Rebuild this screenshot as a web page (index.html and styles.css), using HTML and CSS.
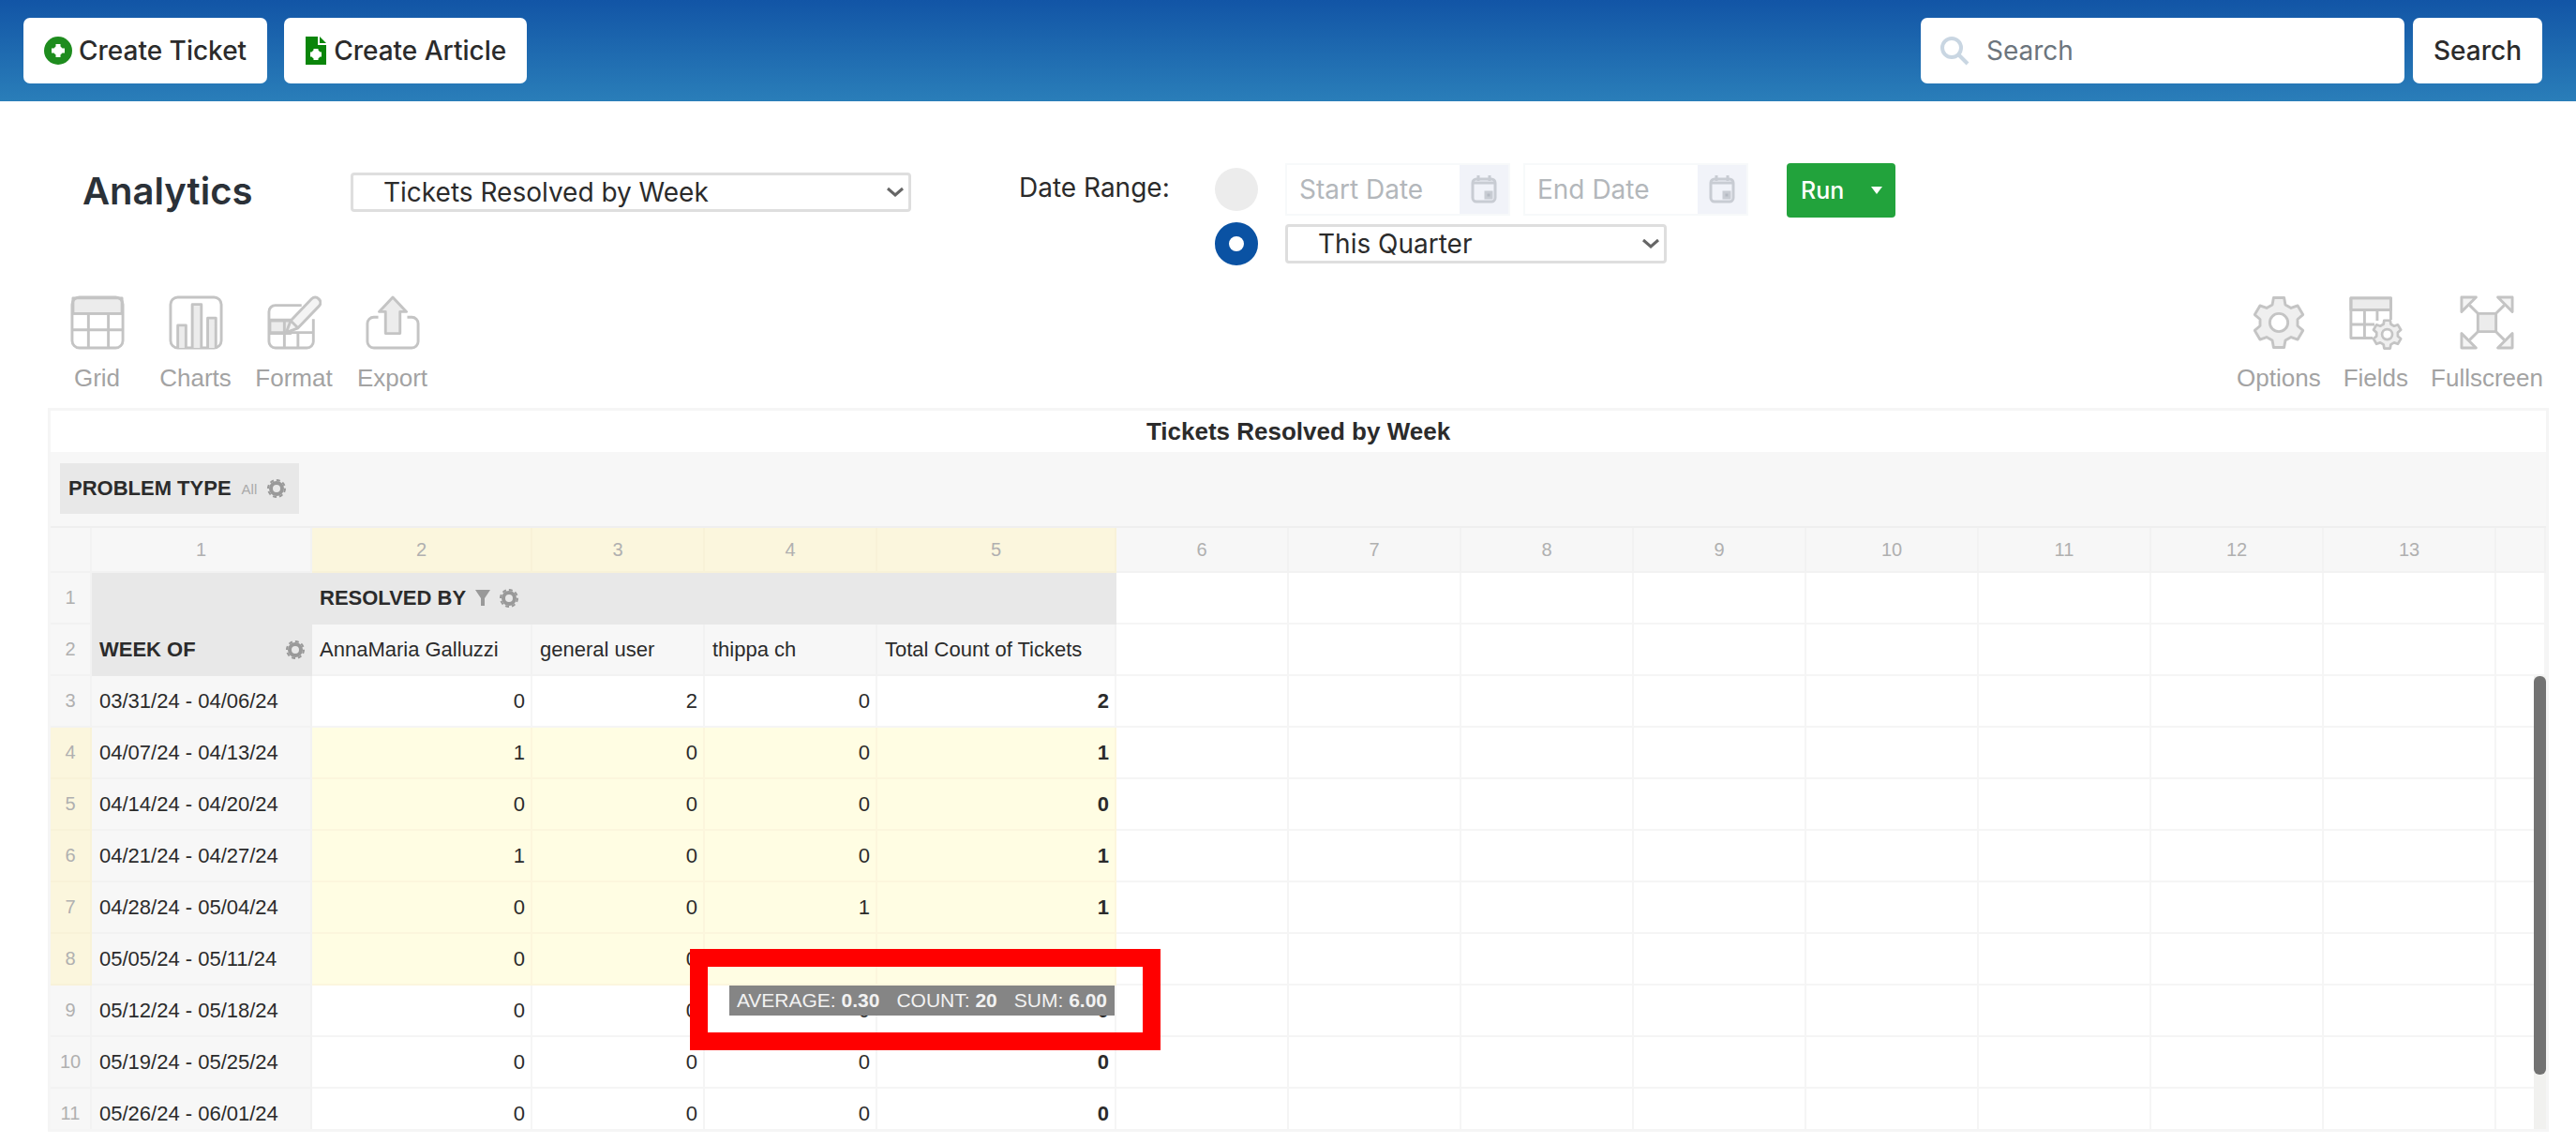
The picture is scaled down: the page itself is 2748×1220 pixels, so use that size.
FILE: index.html
```html
<!DOCTYPE html>
<html lang="en">
<head>
    <meta charset="UTF-8">
    <meta name="viewport" content="width=device-width, initial-scale=1.0">
    <title>Analytics</title>
    <link rel="stylesheet" href="styles.css">
</head>
<body>
    <svg class="sprite" aria-hidden="true">
        <symbol id="gear" viewBox="0 0 60 60">
            <path d="M22.8 10.3 24.2 2.6H35.8L37.2 10.3 43.5 13.9 50.8 11.3 56.6 21.3 50.7 26.4V33.6L56.6 38.7 50.8 48.7 43.5 46.1 37.2 49.7 35.8 57.4H24.2L22.8 49.7 16.5 46.1 9.2 48.7 3.4 38.7 9.3 33.6V26.4L3.4 21.3 9.2 11.3 16.5 13.9Z"/>
            <circle class="hole" cx="30" cy="30" r="10"/>
        </symbol>
        <symbol id="cog" viewBox="0 0 20 20">
            <circle cx="10" cy="10" r="6" stroke-width="4"/>
            <circle cx="10" cy="10" r="9" stroke-width="2" stroke-dasharray="4 3"/>
        </symbol>
        <symbol id="calendar" viewBox="0 0 30 32">
            <rect x="3" y="5" width="24" height="24" rx="4"/>
            <path d="M3 9h24M9 1v6M21 1v6"/>
            <rect class="day" x="17" y="19" width="6" height="6"/>
        </symbol>
        <symbol id="chevron" viewBox="0 0 20 12">
            <path d="M2 2l8 7 8-7"/>
        </symbol>
    </svg>

    <header class="topbar">
        <div class="topbar-group">
            <button type="button" class="btn">
                <svg width="30" height="30" viewBox="0 0 30 30" aria-hidden="true">
                    <circle cx="15" cy="15" r="15" fill="#1e8c1e"/>
                    <path d="M15 8v14M8 15h14" stroke="#fff" stroke-width="5"/>
                    <circle cx="15" cy="15" r="5" fill="#fff"/>
                </svg>
                Create Ticket
            </button>
            <button type="button" class="btn">
                <svg width="24" height="30" viewBox="0 0 24 30" aria-hidden="true">
                    <path d="M1 0H14V9H23V30H1Z" fill="#0a850a"/>
                    <path d="M16 0l7 7h-7z" fill="#0a850a"/>
                    <path d="M12 13v12M6 19h12" stroke="#fff" stroke-width="5"/>
                    <circle cx="12" cy="19" r="5" fill="#fff"/>
                </svg>
                Create Article
            </button>
        </div>
        <form class="search">
            <label class="search-box">
                <svg width="32" height="32" viewBox="0 0 32 32" fill="none" stroke="#c9d6e2" stroke-width="4" aria-hidden="true">
                    <circle cx="13" cy="13" r="10"/>
                    <path d="M20 20l10 10"/>
                </svg>
                <input type="search" class="search-input" placeholder="Search" aria-label="Search">
            </label>
            <button type="button" class="btn">Search</button>
        </form>
    </header>

    <section class="report-bar">
        <h1 class="page-title">Analytics</h1>
        <div class="select report-select">
            <select aria-label="Report">
                <option>Tickets Resolved by Week</option>
            </select>
            <svg><use href="#chevron"/></svg>
        </div>
        <fieldset class="date-range">
            <legend class="date-label">Date Range:</legend>
            <div class="date-rows">
                <div class="date-row">
                    <input type="radio" class="radio" name="range" aria-label="Custom dates">
                    <div class="date-field">
                        <input type="text" placeholder="Start Date" aria-label="Start Date">
                        <button type="button" aria-label="Pick start date"><svg><use href="#calendar"/></svg></button>
                    </div>
                    <div class="date-field">
                        <input type="text" placeholder="End Date" aria-label="End Date">
                        <button type="button" aria-label="Pick end date"><svg><use href="#calendar"/></svg></button>
                    </div>
                </div>
                <div class="date-row">
                    <input type="radio" class="radio" name="range" aria-label="Preset range" checked>
                    <div class="select range-select">
                        <select aria-label="Preset range">
                            <option>This Quarter</option>
                        </select>
                        <svg><use href="#chevron"/></svg>
                    </div>
                </div>
            </div>
        </fieldset>
        <button type="button" class="run-btn">Run
            <svg width="14" height="10" viewBox="0 0 14 10" aria-hidden="true"><path d="M1 1h12l-6 8z" fill="#fff"/></svg>
        </button>
    </section>

    <nav class="toolbar">
        <div class="tools tools-left">
            <button type="button" class="tool">
                <svg viewBox="0 0 60 60" aria-hidden="true">
                    <path class="shade" d="M3 3h54v17H3z"/>
                    <rect x="2" y="2" width="56" height="56" rx="8"/>
                    <path d="M2 20h56M2 38h56M20 20v38M42 20v38"/>
                </svg>
                Grid
            </button>
            <button type="button" class="tool">
                <svg viewBox="0 0 60 60" aria-hidden="true">
                    <rect x="2" y="2" width="56" height="56" rx="8"/>
                    <path class="shade" d="M10 58V33h9v25M26 58V10h10v48M43 58V25h9v33"/>
                </svg>
                Charts
            </button>
            <button type="button" class="tool">
                <svg viewBox="0 0 60 60" aria-hidden="true">
                    <path class="shade" d="M3 28h23v14H3z"/>
                    <path d="M38 11H9a7 7 0 0 0-7 7v33a7 7 0 0 0 7 7h35a7 7 0 0 0 7-7V26M2 27h24M2 41h49M19 27v31M34 41v17"/>
                    <path class="paper" d="M21 41l5-13L49 4q4-4 8 0t0 8L34 36z"/>
                    <path d="M26 28l8 8"/>
                </svg>
                Format
            </button>
            <button type="button" class="tool">
                <svg viewBox="0 0 60 60" aria-hidden="true">
                    <path d="M14 24H9a7 7 0 0 0-7 7v20a7 7 0 0 0 7 7h42a7 7 0 0 0 7-7V31a7 7 0 0 0-7-7h-5"/>
                    <path class="shade" d="M30 2l15 16h-7v24H22V18h-7z"/>
                </svg>
                Export
            </button>
        </div>
        <div class="tools tools-right">
            <button type="button" class="tool">
                <svg viewBox="0 0 60 60" class="tool-gear" aria-hidden="true"><use href="#gear"/></svg>
                Options
            </button>
            <button type="button" class="tool">
                <svg viewBox="0 0 60 60" aria-hidden="true">
                    <path class="shade" d="M3 3h44v13H3z"/>
                    <path d="M27 47H3V3h44v24M3 16h44M3 32h26M18 16v31M32 16v12"/>
                    <svg x="26" y="26" viewBox="0 0 60 60" class="tool-gear small"><use href="#gear"/></svg>
                </svg>
                Fields
            </button>
            <button type="button" class="tool">
                <svg viewBox="0 0 60 60" aria-hidden="true">
                    <path class="shade" d="M20 20h20v20H20z"/>
                    <path d="M20 20l-9-9M40 20l9-9M20 40l-9 9M40 40l9 9"/>
                    <path class="paper" d="M2 18V2h16zM58 18V2H42zM2 42v16h16zM58 42v16H42z"/>
                </svg>
                Fullscreen
            </button>
        </div>
    </nav>

    <main class="grid">
        <div class="grid-title">Tickets Resolved by Week</div>
        <div class="grid-filters">
            <button type="button" class="filter-chip">PROBLEM TYPE <small>All</small> <svg class="cog"><use href="#cog"/></svg></button>
        </div>
        <div class="grid-body">
            <table>
                <colgroup>
                    <col class="col-num"><col class="col-week"><col class="col-wide"><col class="col"><col class="col"><col class="col-total">
                    <col class="col"><col class="col"><col class="col"><col class="col"><col class="col"><col class="col"><col class="col"><col class="col"><col>
                </colgroup>
                <thead>
                    <tr class="numbers">
                        <th></th><th>1</th><th class="on">2</th><th class="on">3</th><th class="on">4</th><th class="on">5</th>
                        <th>6</th><th>7</th><th>8</th><th>9</th><th>10</th><th>11</th><th>12</th><th>13</th><th></th>
                    </tr>
                </thead>
                <tbody>
                    <tr>
                        <th>1</th>
                        <td class="field"></td>
                        <td class="field" colspan="4"><span class="field-name">RESOLVED BY <svg class="funnel" viewBox="0 0 16 18" aria-hidden="true"><path d="M0 0h16l-6 9v8H6V9z"/></svg><svg class="cog"><use href="#cog"/></svg></span></td>
                        <td></td><td></td><td></td><td></td><td></td><td></td><td></td><td></td><td></td>
                    </tr>
                    <tr>
                        <th>2</th>
                        <td class="field"><span class="field-name spread">WEEK OF <svg class="cog"><use href="#cog"/></svg></span></td>
                        <td class="member">AnnaMaria Galluzzi</td><td class="member">general user</td><td class="member">thippa ch</td><td class="member">Total Count of Tickets</td>
                        <td></td><td></td><td></td><td></td><td></td><td></td><td></td><td></td><td></td>
                    </tr>
                    <tr>
                        <th>3</th><td class="member">03/31/24 - 04/06/24</td>
                        <td>0</td><td>2</td><td>0</td><td class="total">2</td>
                        <td></td><td></td><td></td><td></td><td></td><td></td><td></td><td></td><td></td>
                    </tr>
                    <tr class="selected">
                        <th>4</th><td class="member">04/07/24 - 04/13/24</td>
                        <td class="sel">1</td><td class="sel">0</td><td class="sel">0</td><td class="sel total">1</td>
                        <td></td><td></td><td></td><td></td><td></td><td></td><td></td><td></td><td></td>
                    </tr>
                    <tr class="selected">
                        <th>5</th><td class="member">04/14/24 - 04/20/24</td>
                        <td class="sel">0</td><td class="sel">0</td><td class="sel">0</td><td class="sel total">0</td>
                        <td></td><td></td><td></td><td></td><td></td><td></td><td></td><td></td><td></td>
                    </tr>
                    <tr class="selected">
                        <th>6</th><td class="member">04/21/24 - 04/27/24</td>
                        <td class="sel">1</td><td class="sel">0</td><td class="sel">0</td><td class="sel total">1</td>
                        <td></td><td></td><td></td><td></td><td></td><td></td><td></td><td></td><td></td>
                    </tr>
                    <tr class="selected">
                        <th>7</th><td class="member">04/28/24 - 05/04/24</td>
                        <td class="sel">0</td><td class="sel">0</td><td class="sel">1</td><td class="sel total">1</td>
                        <td></td><td></td><td></td><td></td><td></td><td></td><td></td><td></td><td></td>
                    </tr>
                    <tr class="selected">
                        <th>8</th><td class="member">05/05/24 - 05/11/24</td>
                        <td class="sel">0</td><td class="sel">0</td><td class="sel">0</td><td class="sel total">0</td>
                        <td></td><td></td><td></td><td></td><td></td><td></td><td></td><td></td><td></td>
                    </tr>
                    <tr>
                        <th>9</th><td class="member">05/12/24 - 05/18/24</td>
                        <td>0</td><td>0</td><td>0</td>
                        <td class="total anchor">0
                            <div class="summary"><span>AVERAGE: <b>0.30</b></span><span>COUNT: <b>20</b></span><span>SUM: <b>6.00</b></span></div>
                            <div class="highlight"></div>
                        </td>
                        <td></td><td></td><td></td><td></td><td></td><td></td><td></td><td></td><td></td>
                    </tr>
                    <tr>
                        <th>10</th><td class="member">05/19/24 - 05/25/24</td>
                        <td>0</td><td>0</td><td>0</td><td class="total">0</td>
                        <td></td><td></td><td></td><td></td><td></td><td></td><td></td><td></td><td></td>
                    </tr>
                    <tr>
                        <th>11</th><td class="member">05/26/24 - 06/01/24</td>
                        <td>0</td><td>0</td><td>0</td><td class="total">0</td>
                        <td></td><td></td><td></td><td></td><td></td><td></td><td></td><td></td><td></td>
                    </tr>
                </tbody>
            </table>
            <div class="scrollbar"><div class="scroll-thumb"></div></div>
        </div>
    </main>
</body>
</html>
```

FILE: styles.css
```css
* {
    margin: 0;
    padding: 0;
    box-sizing: border-box;
}

body {
    display: flex;
    flex-direction: column;
    height: 100vh;
    overflow: hidden;
    background-color: #fff;
    color: #2b2b2b;
    font-family: Inter, "Liberation Sans", sans-serif;
    font-size: 28px;
}

button,
input,
select {
    font: inherit;
    color: inherit;
    border: none;
    background: none;
}

.sprite {
    display: none;
}

/* top bar */

.topbar {
    display: flex;
    justify-content: space-between;
    padding: 19px 36px 19px 25px;
    background: linear-gradient(#1255a6, #2a7eb9);
}

.topbar-group {
    display: flex;
    gap: 18px;
}

.btn {
    display: flex;
    align-items: center;
    gap: 7px;
    height: 70px;
    padding: 0 22px;
    border-radius: 7px;
    background-color: #fff;
    font-weight: 500;
}

.search {
    display: flex;
    gap: 9px;
}

.search-box {
    display: flex;
    align-items: center;
    gap: 18px;
    width: 516px;
    padding: 0 20px;
    border-radius: 7px;
    background-color: #fff;
}

.search-input {
    flex: 1;
    min-width: 0;
    outline: none;
}

.search-input::placeholder {
    color: #6c757d;
}

/* report picker */

.report-bar {
    display: flex;
    align-items: flex-start;
    padding: 66px 35px 32px 88px;
}

.page-title {
    width: 286px;
    font-size: 40px;
    font-weight: 600;
    line-height: 60px;
    color: #2b3138;
}

.select {
    display: grid;
    align-items: center;
    height: 42px;
    border: 3px solid #dedede;
    border-radius: 4px;
}

.select select,
.select svg {
    grid-area: 1 / 1;
}

.select select {
    appearance: none;
    width: 100%;
    height: 36px;
    padding-left: 32px;
}

.select svg {
    justify-self: end;
    width: 20px;
    height: 12px;
    margin-right: 4px;
    fill: none;
    stroke: #666;
    stroke-width: 3;
    pointer-events: none;
}

.report-select {
    width: 598px;
    margin: 10px 115px 0 0;
}

.date-range {
    display: flex;
    border: none;
}

.date-label {
    float: left;
    width: 209px;
    line-height: 52px;
}

.date-rows {
    display: flex;
    flex-direction: column;
    gap: 7px;
}

.date-row {
    display: flex;
    align-items: center;
    gap: 14px;
}

.radio {
    appearance: none;
    width: 46px;
    height: 46px;
    margin-right: 15px;
    border-radius: 50%;
    background-color: #ececec;
}

.radio:checked {
    border: 15px solid #0a52a3;
    background-color: #fff;
}

.date-field {
    display: flex;
    width: 240px;
    height: 56px;
    border: 2px solid #f7f9fa;
}

.date-field input {
    flex: 1;
    min-width: 0;
    padding-left: 13px;
}

.date-field input::placeholder {
    color: #b3b7bb;
}

.date-field button {
    display: flex;
    align-items: center;
    justify-content: center;
    width: 52px;
    background-color: #f1f3f9;
}

.date-field svg {
    width: 30px;
    height: 32px;
    fill: none;
    stroke: #c8ccd3;
    stroke-width: 3;
}

.day {
    fill: #b4b9c2;
}

.range-select {
    width: 407px;
}

.run-btn {
    display: flex;
    align-items: center;
    gap: 28px;
    height: 58px;
    margin-left: 41px;
    padding: 0 13px 0 15px;
    border-radius: 4px;
    background-color: #22a33c;
    color: #fff;
    font-size: 25px;
    font-weight: 500;
}

/* toolbar */

.toolbar {
    display: flex;
    justify-content: space-between;
    padding: 0 23px 17px 51px;
}

.tools {
    display: flex;
}

.tool {
    display: flex;
    flex-direction: column;
    align-items: center;
    gap: 15px;
    padding: 0 12px;
    font-family: "Liberation Sans", Arial, sans-serif;
    font-size: 26px;
    line-height: 30px;
    color: #a3a3a3;
}

.tools-left .tool {
    width: 105px;
    padding: 0;
}

.tool svg {
    width: 58px;
    height: 58px;
    fill: none;
    stroke: #c4c4c4;
    stroke-width: 3;
    stroke-linejoin: round;
}

.tool svg .shade {
    fill: #ececec;
}

.tool svg .paper {
    fill: #f4f4f4;
}

.tool svg.tool-gear {
    fill: #efefef;
}

.tool svg .small {
    width: 34px;
    height: 34px;
    stroke-width: 5;
}

.hole {
    fill: #fff;
}

/* pivot grid */

.grid {
    display: flex;
    flex: 1;
    flex-direction: column;
    min-height: 0;
    margin: 0 29px 13px 51px;
    border: 3px solid #f5f5f5;
    font-family: "Liberation Sans", Arial, sans-serif;
    font-size: 22px;
}

.grid-title {
    line-height: 44px;
    text-align: center;
    font-size: 26px;
    font-weight: bold;
}

.grid-filters {
    padding: 12px 10px;
    height: 81px;
    border-bottom: 2px solid #efefef;
    background-color: #f7f7f7;
}

.filter-chip {
    display: flex;
    align-items: center;
    gap: 11px;
    height: 54px;
    padding: 0 14px 0 9px;
    background-color: #e8e8e8;
    font-weight: bold;
}

.filter-chip small {
    font-size: 15px;
    font-weight: normal;
    color: #aaa;
}

.cog {
    width: 20px;
    height: 20px;
    fill: none;
    stroke: #999;
}

.funnel {
    width: 16px;
    height: 18px;
    fill: #999;
}

.grid-body {
    display: flex;
    position: relative;
    flex: 1;
    min-height: 0;
    overflow: hidden;
}

table {
    width: 100%;
    table-layout: fixed;
    border-collapse: separate;
    border-spacing: 0;
    align-self: flex-start;
}

.col-num {
    width: 44px;
}

.col-week {
    width: 235px;
}

.col-wide {
    width: 235px;
}

.col {
    width: 184px;
}

.col-total {
    width: 255px;
}

th,
td {
    height: 55px;
    padding: 0 6px 0 8px;
    border-right: 2px solid #f5f5f5;
    border-bottom: 2px solid #f5f5f5;
    text-align: right;
    white-space: nowrap;
}

th {
    padding: 0;
    border-color: #f2f2f2;
    background-color: #f7f7f7;
    text-align: center;
    font-size: 20px;
    font-weight: normal;
    color: #b0b0b0;
}

.numbers th {
    height: 48px;
}

.numbers .on,
.selected th {
    border-color: #f8f2d8;
    background-color: #fbf6dd;
}

.field {
    border-color: #e8e8e8;
    background-color: #e8e8e8;
    text-align: left;
}

.field-name {
    display: flex;
    align-items: center;
    gap: 10px;
    font-weight: bold;
}

.spread {
    justify-content: space-between;
}

.member {
    border-color: #f2f2f2;
    background-color: #f7f7f7;
    text-align: left;
}

.sel {
    border-color: #fcf6dd;
    background-color: #fffde3;
}

.total {
    font-weight: bold;
}

.anchor {
    position: relative;
}

/* selection totals, pinned under the selected range */
.summary {
    display: flex;
    gap: 18px;
    position: absolute;
    top: 0;
    right: 0;
    padding: 0 8px;
    background-color: #858585;
    color: #f2f2f2;
    font-size: 21px;
    font-weight: normal;
    line-height: 32px;
}

.highlight {
    position: absolute;
    top: -39px;
    right: -49px;
    width: 502px;
    height: 108px;
    border: 19px solid #f00;
}

.scrollbar {
    position: absolute;
    right: 0;
    top: 158px;
    bottom: 0;
    width: 13px;
    background-color: #f1f1ef;
}

.scroll-thumb {
    height: 88%;
    border-radius: 6px;
    background-color: #727272;
}
```
